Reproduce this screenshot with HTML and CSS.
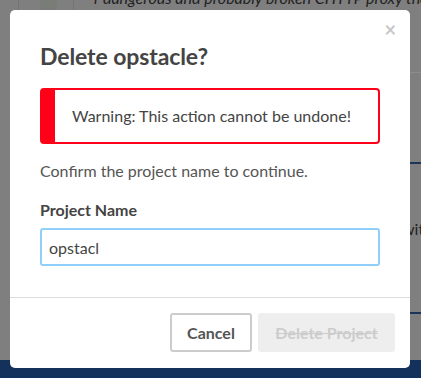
FILE: index.html
```html
<!DOCTYPE html>
<html lang="en">
<head>
<meta charset="utf-8">
<title>Delete opstacle?</title>
<link rel="stylesheet" href="styles.css">
</head>
<body>
<div class="page">
  <div class="col"></div>
  <div class="col col-line"></div>
  <div class="col"></div>
  <div class="col col-green"></div>
  <div class="col"></div>
  <div class="col col-line"></div>
  <div class="content">
    <div class="bg-head"><p class="bg-lead">r dangerous and probably broken CHTTP proxy that</p></div>
    <div class="bg-sec1"></div>
    <div class="bg-sec2"><p class="bg-text">with</p></div>
  </div>
</div>
<div class="band"></div>

<div class="overlay">
  <div class="modal" role="dialog">
    <div class="modal-header">
      <h2 class="title">Delete opstacle?</h2>
      <button class="close" type="button">×</button>
    </div>
    <div class="modal-body">
      <div class="alert">Warning: This action cannot be undone!</div>
      <p class="confirm">Confirm the project name to continue.</p>
      <label class="label" for="pname">Project Name</label>
      <input id="pname" class="input" type="text" value="opstacl">
    </div>
    <div class="modal-footer">
      <button class="btn btn-cancel" type="button">Cancel</button>
      <button class="btn btn-delete" type="button" disabled>Delete Project</button>
    </div>
  </div>
</div>
</body>
</html>
```
FILE: styles.css
```css
* { box-sizing: border-box; }
html, body { margin: 0; padding: 0; }
body {
  width: 421px;
  height: 378px;
  overflow: hidden;
  position: relative;
  background: #7f7f7f;
  font-family: Lato, "Liberation Sans", sans-serif;
  font-size: 16px;
  color: #444;
}

/* background page (already dimmed) */
.page {
  display: grid;
  grid-template-columns: 18px 1px 21px 17px 16px 1px 1fr;
  height: 360px;
}
.col { background: #7f7f7f; }
.col-line { background: #747474; }
.col-green { background: #7a7d77; }
.content { overflow: hidden; }
.bg-head {
  height: 73px;
  border-bottom: 1px solid #8c8c8c;
  overflow: hidden;
}
.bg-lead {
  margin: -12px 0 0 20px;
  font-style: italic;
  font-size: 16px;
  line-height: 20px;
  color: #1e1e1e;
  white-space: nowrap;
}
.bg-sec1 {
  height: 91px;
  border-bottom: 2px solid #1d3458;
}
.bg-sec2 {
  height: 150px;
  border-bottom: 2px solid #1d3458;
  padding-top: 55px;
}
.bg-text {
  margin: 0 0 0 328px;
  line-height: 20px;
  color: #1e1e1e;
  white-space: nowrap;
}
.band {
  height: 18px;
  background: #13315a;
}

/* overlay + modal */
.overlay {
  position: absolute;
  inset: 0;
  padding: 10px;
}
.modal {
  width: 400px;
  background: #fff;
  border-radius: 5px;
}
.modal-header {
  display: flex;
  justify-content: space-between;
  align-items: flex-start;
  padding: 9px 14px 0 30px;
}
.title {
  margin: 22px 0 0;
  font-size: 23px;
  line-height: 30px;
  font-weight: 700;
  letter-spacing: -0.1px;
  color: #444;
}
.close {
  border: 0;
  background: none;
  padding: 0;
  font-family: inherit;
  font-size: 20px;
  line-height: 20px;
  font-weight: 700;
  color: #c8c8c8;
}
.modal-body {
  padding: 17px 30px 31px;
}
.alert {
  border: 2px solid #ff0019;
  border-left-width: 15px;
  border-radius: 4px;
  padding: 14px 15px 14px 17px;
  line-height: 24px;
  color: #444;
}
.confirm {
  margin: 15px 0 0;
  line-height: 24px;
  color: #555;
}
.label {
  display: block;
  margin-top: 15px;
  line-height: 24px;
  font-weight: 700;
  color: #444;
}
.input {
  display: block;
  width: 100%;
  height: 38px;
  margin-top: 6px;
  border: 2px solid #90cffa;
  border-radius: 3px;
  padding: 0 7px;
  font-family: inherit;
  font-size: 16px;
  color: #444;
  outline: none;
}
.modal-footer {
  display: flex;
  justify-content: flex-end;
  gap: 6px;
  border-top: 1px solid #ddd;
  padding: 15px 15px 16px;
}
.btn {
  height: 39px;
  border-radius: 3px;
  font-family: inherit;
  font-size: 16px;
  font-weight: 700;
  padding: 0;
}
.btn-cancel {
  width: 82px;
  background: #fff;
  border: 2px solid #ccc;
  color: #555;
}
.btn-delete {
  width: 137px;
  background: #eee;
  border: 2px solid #eee;
  color: #ccc;
  text-decoration: line-through;
}
```
